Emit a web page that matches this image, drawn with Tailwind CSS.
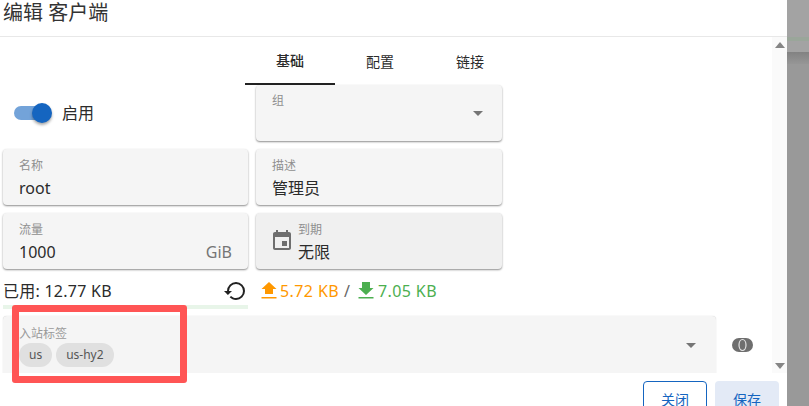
<!DOCTYPE html>
<html lang="zh-CN">
<head>
  <meta charset="UTF-8" />
  <title>编辑 客户端</title>
  <script src="https://cdn.jsdelivr.net/npm/@tailwindcss/browser@4"></script>
</head>
<body class="h-[406px] w-[809px] overflow-hidden bg-[#989898] font-['Noto_Sans','Noto_Sans_CJK_SC',sans-serif] text-[#2b2b2b]">
  <div class="relative flex h-[406px] w-[809px]">

    <!-- dialog -->
    <div class="flex h-full w-[787px] flex-col bg-white">
      <div class="h-[37px] shrink-0 border-b border-[#e8e8e8] pl-[3px] text-[20px] leading-[26px] text-[#333]">编辑 客户端</div>

      <div class="flex h-[336px] shrink-0 overflow-hidden">
        <div class="w-[772px]">
          <!-- tabs -->
          <div class="flex h-[48px] pl-[245px] text-[14px]">
            <div class="flex h-[48px] w-[90px] items-center justify-center border-b-2 border-[#222] font-medium">基础</div>
            <div class="flex h-[48px] w-[90px] items-center justify-center">配置</div>
            <div class="flex h-[48px] w-[90px] items-center justify-center">链接</div>
          </div>

          <div class="grid w-[502px] grid-cols-[245px_246px] gap-x-[8px] gap-y-[8px] pl-[3px]">
            <div class="flex h-[56px] items-center pl-[11px]">
              <div class="relative h-[14px] w-[34px] rounded-full bg-[#1565c0]/60">
                <div class="absolute top-[-3px] right-[-4px] h-[20px] w-[20px] rounded-full bg-[#1565c0] shadow-[0_2px_3px_rgba(0,0,0,0.35)]"></div>
              </div>
              <span class="ml-[14px] text-[16px]">启用</span>
            </div>
            <div class="relative h-[56px] rounded-[4px] bg-[#f5f5f5] pl-[16px] pt-[7px] text-[12px] leading-[18px] text-[#8f8f8f] shadow-[0_1px_2px_rgba(0,0,0,0.45)]">
              组
              <div class="absolute top-[26px] right-[19px] h-0 w-0 border-x-[5px] border-t-[5px] border-x-transparent border-t-[#757575]"></div>
            </div>

            <div class="h-[56px] rounded-[4px] bg-[#f5f5f5] px-[16px] pt-[7px] shadow-[0_1px_2px_rgba(0,0,0,0.45)]">
              <div class="text-[12px] leading-[20px] text-[#8f8f8f]">名称</div>
              <div class="text-[16px] leading-[24px]">root</div>
            </div>
            <div class="h-[56px] rounded-[4px] bg-[#f5f5f5] px-[16px] pt-[7px] shadow-[0_1px_2px_rgba(0,0,0,0.45)]">
              <div class="text-[12px] leading-[20px] text-[#8f8f8f]">描述</div>
              <div class="text-[16px] leading-[24px]">管理员</div>
            </div>

            <div class="flex h-[56px] justify-between rounded-[4px] bg-[#f5f5f5] px-[16px] pt-[7px] shadow-[0_1px_2px_rgba(0,0,0,0.45)]">
              <div>
                <div class="text-[12px] leading-[20px] text-[#8f8f8f]">流量</div>
                <div class="text-[16px] leading-[24px]">1000</div>
              </div>
              <div class="self-end pb-[5px] text-[16px] leading-[24px] text-[#757575]">GiB</div>
            </div>
            <div class="flex h-[56px] rounded-[4px] bg-[#f0f0f0] pl-[14px] pt-[7px] shadow-[0_1px_2px_rgba(0,0,0,0.45)]">
              <svg class="mt-[8px] h-[24px] w-[24px] fill-[#6e6e6e]" viewBox="0 0 24 24"><path d="M19 4h-1V2h-2v2H8V2H6v2H5c-1.11 0-2 .9-2 2v14c0 1.1.89 2 2 2h14c1.1 0 2-.9 2-2V6c0-1.1-.9-2-2-2zm0 16H5V9h14v11zM12 13h5v5h-5z" /></svg>
              <div class="ml-[4px]">
                <div class="text-[12px] leading-[20px] text-[#8f8f8f]">到期</div>
                <div class="text-[16px] leading-[24px]">无限</div>
              </div>
            </div>
          </div>

          <!-- usage -->
          <div class="flex h-[36px] items-center pl-[3px] pt-[8px] text-[16px]">
            <div class="flex w-[245px] items-center justify-between pr-[1px]">
              <span class="tracking-[0.25px]">已用: 12.77 KB</span>
              <svg class="h-[24px] w-[24px] fill-[#222]" viewBox="0 0 24 24"><path d="M13 3a9 9 0 0 0-9 9H1l3.890 3.890.07.14L9 12H6a7 7 0 0 1 7-7 7 7 0 0 1 7 7 7 7 0 0 1-7 7c-1.930 0-3.680-.79-4.940-2.060l-1.420 1.420C8.270 20 10.500 21 13 21a9 9 0 0 0 9-9 9 9 0 0 0-9-9z" /></svg>
            </div>
            <svg class="ml-[13px] h-[18px] w-[16px] fill-[#ff9800]" viewBox="0 0 16 18"><path d="M4 12V7H.5L8 0l7.500 7H12v5zM.5 15h15v1.500H.5z" /></svg>
            <span class="ml-[3px] tracking-[0.4px] text-[#ff9800]">5.72 KB</span>
            <span class="ml-[5px] text-[#666]">/</span>
            <svg class="ml-[8px] h-[18px] w-[16px] fill-[#4caf50]" viewBox="0 0 16 18"><path d="M4 0h8v6h3.500L8 13 .5 6H4zM.5 15h15v1.500H.5z" /></svg>
            <span class="ml-[4px] tracking-[0.4px] text-[#4caf50]">7.05 KB</span>
          </div>
          <div class="ml-[3px] h-[4px] w-[245px] bg-[#e8f5e9]"></div>

          <!-- inbound tags -->
          <div class="mt-[7px] flex items-center pl-[3px]">
            <div class="relative h-[57px] w-[713px] rounded-t-[4px] bg-[#f5f5f5] pl-[16px] pt-[9px] shadow-[0_0_1px_rgba(0,0,0,0.25)]">
              <div class="text-[12px] leading-[18px] text-[#9a9a9a]">入站标签</div>
              <div class="flex gap-[4px] text-[12px] text-[#555]">
                <span class="flex h-[24px] items-center rounded-full bg-[#e0e0e0] px-[10px]">us</span>
                <span class="flex h-[24px] items-center rounded-full bg-[#e0e0e0] px-[10px]">us-hy2</span>
              </div>
              <div class="absolute top-[27px] right-[20px] h-0 w-0 border-x-[5px] border-t-[5px] border-x-transparent border-t-[#757575]"></div>
            </div>
            <svg class="ml-[16px] h-[14px] w-[21px]" viewBox="0 0 21 14">
              <rect width="21" height="14" rx="7" fill="#6e6e6e" />
              <ellipse cx="10.500" cy="7" rx="3.500" ry="5.500" fill="none" stroke="#e4e4e4" stroke-width="1.200" />
            </svg>
          </div>
        </div>

        <!-- scrollbar -->
        <div class="flex w-[15px] flex-col items-center justify-between bg-[#fafafa] pt-[5px] pb-[4px]">
          <div class="h-0 w-0 border-x-[5px] border-b-[6px] border-x-transparent border-b-[#858585]"></div>
          <div class="h-0 w-0 border-x-[5px] border-t-[6px] border-x-transparent border-t-[#858585]"></div>
        </div>
      </div>

      <!-- actions -->
      <div class="flex shrink-0 justify-end gap-[8px] pr-[8px] pt-[8px] text-[14px] text-[#1565c0]">
        <div class="flex h-[36px] w-[64px] items-center justify-center rounded-[4px] border border-[#1565c0]">关闭</div>
        <div class="flex h-[36px] w-[64px] items-center justify-center rounded-[4px] bg-[#e3eaf6]">保存</div>
      </div>
    </div>

    <!-- page behind the dialog -->
    <div class="relative h-full w-[22px] bg-[#999]">
      <div class="absolute top-0 h-[52px] w-full bg-[#a3a3a3]"></div>
      <div class="absolute top-[37px] h-[4px] w-full bg-[#9aa69a]"></div>
      <div class="absolute top-[52px] h-[12px] w-full bg-linear-to-b from-[#828282] to-[#969696]"></div>
    </div>

    <!-- red annotation box -->
    <div class="absolute top-[305px] left-[12px] h-[78px] w-[175px] rounded-[3px] border-[7px] border-[#ff5555]"></div>
  </div>
</body>
</html>
